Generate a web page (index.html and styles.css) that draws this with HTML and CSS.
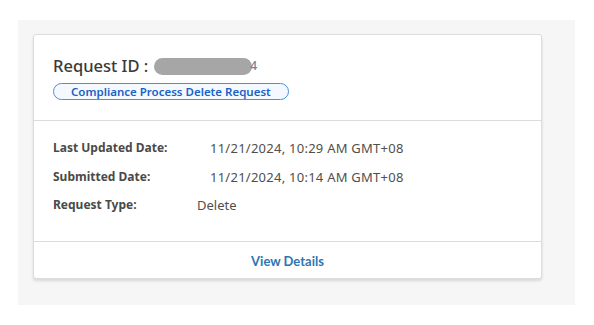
FILE: index.html
```html
<!DOCTYPE html>
<html><head>
<title>Request</title>
<link rel="stylesheet" href="styles.css">
</head><body>

<div class="panel">
  <div class="card">
    <div class="card-head">
      <div class="title">Request ID : <span class="masked"></span><span class="tail">4</span></div>
      <span class="badge">Compliance Process Delete Request</span>
    </div>

    <div class="card-body">
      <div class="row"><span class="label">Last Updated Date:</span><span class="value">11/21/2024, 10:29 AM GMT+08</span></div>
      <div class="row"><span class="label">Submitted Date:</span><span class="value">11/21/2024, 10:14 AM GMT+08</span></div>
      <div class="row"><span class="label">Request Type:</span><span class="value type">Delete</span></div>
    </div>

    <div class="card-foot"><a href="#">View Details</a></div>
  </div>
</div>

</body></html>
```

FILE: styles.css
```css
html, body {
  margin: 0;
  background: #fff;
  }
body {
  padding: 20px 19px 20px 18px;
  font-family: "Noto Sans", "Open Sans", sans-serif;
  color: #3e3e3c;
  }
.panel {
  background: #f6f6f6;
  padding: 14px 33px 26px 15px;
  height: 245px;
  }
.card {
  background: #fff;
  border: 1px solid #dcdcdc;
  border-radius: 3px;
  box-shadow: 0 2px 3px rgba(0,0,0,0.12);
  height: 243px;
  display: flex;
  flex-direction: column;
  }
.card-head {
  padding: 20px 19px 19px;
  border-bottom: 1px solid #dddbda;
  }
.title {
  font-size: 16.5px;
  font-weight: 500;
  line-height: 22px;
  display: flex;
  align-items: center;
  color: #3a3a38;
  }
.masked {
  display: inline-block;
  width: 98px;
  height: 17px;
  border-radius: 9px;
  background: #a6a6a6;
  margin-left: 6px;
  }
.tail {
  font-size: 12px;
  margin-left: -2px;
  color: #6f8199;
  }
.badge {
  display: inline-block;
  margin-top: 6px;
  padding: 0 17px;
  border: 1px solid #4c8ee0;
  border-radius: 10px;
  background: #f4f9ff;
  color: #1a62c6;
  font-size: 11.5px;
  font-weight: 600;
  line-height: 15px;
  }
.card-body {
  flex: 1;
  padding: 13px 19px;
  }
.row {
  display: flex;
  font-size: 12px;
  line-height: 28.5px;
  }
.label {
  width: 157px;
  font-weight: bold;
  color: #4a4a48;
  }
.value {
  font-size: 13px;
  letter-spacing: 0.25px;
  color: #514f4d;
  }
.value.type {
  margin-left: -13px;
  letter-spacing: 0;
  }
.card-foot {
  border-top: 1px solid #dddbda;
  text-align: center;
  height: 36px;
  line-height: 36px;
  }
.card-foot a {
  color: #2e76b2;
  font-family: "Lato", sans-serif;
  font-weight: bold;
  font-size: 13px;
  text-decoration: none;
  }
```
